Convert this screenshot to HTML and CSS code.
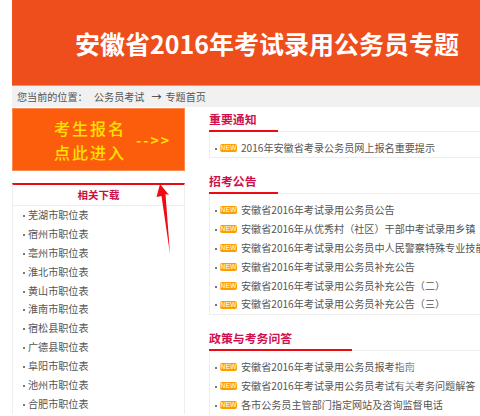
FILE: index.html
```html
<!DOCTYPE html>
<html lang="zh-CN">
<head>
    <meta charset="UTF-8">
    <title>安徽省2016年考试录用公务员专题</title>
    <link rel="stylesheet" href="styles.css">
</head>
<body>

<div class="page">
    <header class="banner">
        <h1>安徽省2016年考试录用公务员专题</h1>
    </header>

    <div class="crumbs">
        <span class="crumb-label">您当前的位置：</span>
        <a>公务员考试</a>
        <span class="crumb-arrow">→</span>
        <a>专题首页</a>
    </div>

    <div class="main">
        <!-- Left column -->
        <div class="side">
            <div class="signup">
                <div class="signup-text">
                    <span>考生报名</span>
                    <span>点此进入</span>
                </div>
                <div class="signup-go">--&gt;&gt;</div>
            </div>

            <div class="downloads">
                <h3>相关下载</h3>
                <ul>
                    <li>芜湖市职位表</li>
                    <li>宿州市职位表</li>
                    <li>亳州市职位表</li>
                    <li>淮北市职位表</li>
                    <li>黄山市职位表</li>
                    <li>淮南市职位表</li>
                    <li>宿松县职位表</li>
                    <li>广德县职位表</li>
                    <li>阜阳市职位表</li>
                    <li>池州市职位表</li>
                    <li>合肥市职位表</li>
                </ul>
            </div>
        </div>

        <!-- Right column -->
        <div class="content">
            <section class="notice">
                <h2><span>重要通知</span></h2>
                <ul class="news news-single">
                    <li><i class="new">NEW</i>2016年安徽省考录公务员网上报名重要提示</li>
                </ul>
            </section>

            <section class="notice">
                <h2><span>招考公告</span></h2>
                <ul class="news">
                    <li><i class="new">NEW</i>安徽省2016年考试录用公务员公告</li>
                    <li><i class="new">NEW</i>安徽省2016年从优秀村（社区）干部中考试录用乡镇（街道）</li>
                    <li><i class="new">NEW</i>安徽省2016年考试录用公务员中人民警察特殊专业技能</li>
                    <li><i class="new">NEW</i>安徽省2016年考试录用公务员补充公告</li>
                    <li><i class="new">NEW</i>安徽省2016年考试录用公务员补充公告（二）</li>
                    <li><i class="new">NEW</i>安徽省2016年考试录用公务员补充公告（三）</li>
                </ul>
            </section>

            <section class="notice">
                <h2><span class="wide">政策与考务问答</span></h2>
                <ul class="news">
                    <li><i class="new">NEW</i>安徽省2016年考试录用公务员报考指南</li>
                    <li><i class="new">NEW</i>安徽省2016年考试录用公务员考试有关考务问题解答</li>
                    <li><i class="new">NEW</i>各市公务员主管部门指定网站及咨询监督电话</li>
                </ul>
            </section>
        </div>
    </div>

    <!-- Red arrow drawn over the page -->
    <svg class="pointer" width="20" height="72" viewBox="0 0 20 72">
        <polygon points="5,0 14,11 10.5,10 15,70 6.5,12 1.5,13" fill="#f00a14"/>
    </svg>

    <!-- Faint paw watermark over the last list -->
    <svg class="watermark" width="36" height="30" viewBox="0 0 36 30">
        <g fill="white" fill-opacity="0.4">
            <ellipse cx="8" cy="12" rx="3.5" ry="4.5"/>
            <ellipse cx="15" cy="5" rx="3.5" ry="4.5"/>
            <ellipse cx="23" cy="5" rx="3.5" ry="4.5"/>
            <ellipse cx="30" cy="12" rx="3.5" ry="4.5"/>
            <ellipse cx="19" cy="20" rx="9" ry="7"/>
        </g>
    </svg>
</div>

</body>
</html>
```

FILE: styles.css
```css
html, body {
    margin: 0;
    padding: 0;
    height: 416px;
    overflow: hidden;
    background-color: white;
}
body {
    font-family: "Noto Sans CJK SC", "Liberation Sans", sans-serif;
    font-size: 10.1px;
    color: #555;
}
ul {
    list-style: none;
    margin: 0;
    padding: 0;
}
.page {
    position: relative;
    width: 468px;
    height: 416px;
    overflow: hidden;
    margin-left: 12px;
}
.banner {
    height: 85px;
    background-color: #ee4d1c;
    border-bottom: 1px solid #f58a68;
    display: flex;
    align-items: center;
    padding-left: 63px;
}
.banner h1 {
    margin: 0 0 -1px;
    color: white;
    font-size: 25px;
    font-weight: 700;
    line-height: 30px;
    white-space: nowrap;
}
.crumbs {
    height: 21px;
    line-height: 21px;
    background-color: #f1f1f1;
    padding-left: 5px;
    display: flex;
    white-space: nowrap;
}
.crumb-label {
    width: 77px;
}
.crumb-arrow {
    width: 21px;
    text-align: center;
    padding-left: 3px;
    box-sizing: border-box;
    color: #333;
}
.main {
    display: grid;
    grid-template-columns: 173px 1fr;
    column-gap: 24px;
    padding-top: 1px;
}
.signup {
    height: 61px;
    background-color: #fc5d0c;
    border: 1px solid #fb8a50;
    display: flex;
    align-items: center;
    color: #ffe000;
}
.signup-text {
    display: flex;
    flex-direction: column;
    margin-left: 41px;
    font-size: 16px;
    font-weight: 500;
    line-height: 24px;
    letter-spacing: 2px;
    white-space: nowrap;
}
.signup-go {
    margin-left: 10px;
    font-size: 14px;
    font-weight: 700;
    letter-spacing: 2px;
}
.downloads {
    margin-top: 12px;
    border-top: 2px solid #ee0a14;
    border-left: 1px solid #eee;
    border-right: 1px solid #eee;
}
.downloads h3 {
    margin: 0;
    height: 20px;
    line-height: 20px;
    font-size: 10.5px;
    font-weight: 700;
    color: #c9103f;
    text-align: center;
    border-bottom: 1px solid #eee;
}
.downloads ul {
    padding-left: 15px;
}
.downloads li {
    height: 18.9px;
    line-height: 18.9px;
    position: relative;
}
.downloads li::before,
.news li::before {
    content: "";
    position: absolute;
    left: -5px;
    top: 9px;
    width: 2px;
    height: 2px;
    background-color: #777;
}
.notice {
    margin-bottom: 12px;
}
.notice h2 {
    margin: 0;
    height: 23px;
    border-bottom: 1px solid #eee;
    font-size: 11.9px;
    font-weight: 700;
    line-height: 21px;
    color: #d0104c;
}
.notice h2 span {
    display: block;
    width: 69px;
    height: 22px;
    border-bottom: 2px solid #ee0a14;
    white-space: nowrap;
}
.notice h2 .wide {
    width: 143px;
}
.news {
    border-left: 1px solid #eee;
    border-bottom: 1px solid #eee;
    padding: 7px 0 0 10px;
    height: 113px;
}
.news-single {
    padding-top: 7px;
    height: 18px;
}
.news li {
    position: relative;
    height: 18.9px;
    line-height: 18.9px;
    white-space: nowrap;
    display: flex;
    align-items: center;
}
.new {
    flex: none;
    width: 17px;
    height: 8px;
    margin-right: 4px;
    background-color: #ff9c00;
    border-radius: 2px;
    color: #ffe9b0;
    font-family: "Liberation Sans", sans-serif;
    font-size: 7px;
    font-weight: 700;
    font-style: normal;
    line-height: 8px;
    text-align: center;
}
.pointer {
    position: absolute;
    left: 143px;
    top: 184px;
}
.watermark {
    position: absolute;
    left: 376px;
    top: 362px;
}
```
